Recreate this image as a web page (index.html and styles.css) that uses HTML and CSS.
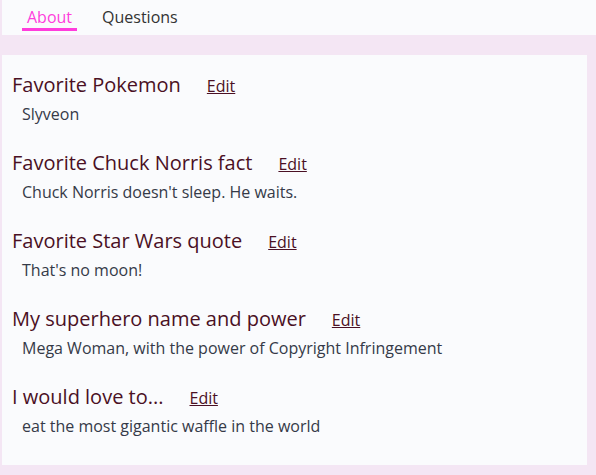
FILE: index.html
```html
<!DOCTYPE html>
<html>
<head>
<meta charset="utf-8">
<link rel="stylesheet" href="styles.css">
</head>
<body>
<nav class="tabs">
  <a class="tab active">About</a>
  <a class="tab">Questions</a>
</nav>
<main class="card">
  <section class="item">
    <div class="item-head"><h2>Favorite Pokemon</h2><a class="edit">Edit</a></div>
    <p>Slyveon</p>
  </section>
  <section class="item">
    <div class="item-head"><h2>Favorite Chuck Norris fact</h2><a class="edit">Edit</a></div>
    <p>Chuck Norris doesn't sleep. He waits.</p>
  </section>
  <section class="item">
    <div class="item-head"><h2>Favorite Star Wars quote</h2><a class="edit">Edit</a></div>
    <p>That's no moon!</p>
  </section>
  <section class="item">
    <div class="item-head"><h2>My superhero name and power</h2><a class="edit">Edit</a></div>
    <p>Mega Woman, with the power of Copyright Infringement</p>
  </section>
  <section class="item">
    <div class="item-head"><h2>I would love to...</h2><a class="edit">Edit</a></div>
    <p>eat the most gigantic waffle in the world</p>
  </section>
</main>
</body>
</html>
```
FILE: styles.css
```css
html, body {
  margin: 0;
  padding: 0;
}
body {
  background: #f4e6f4;
  font-family: "Open Sans", sans-serif;
  height: 475px;
  overflow: hidden;
}
.tabs {
  margin-left: 2px;
  height: 35px;
  background: #fafbfd;
  display: flex;
  gap: 20px;
  padding-left: 20px;
  box-sizing: border-box;
}
.tab {
  font-size: 16px;
  line-height: 22px;
  padding: 6px 5px 0;
  color: #333;
  box-sizing: border-box;
  border-bottom: 3px solid transparent;
  height: 31px;
}
.tab.active {
  color: #ff3ddc;
  border-bottom-color: #ff3ddc;
}
.card {
  margin: 20px 9px 0 2px;
  height: 410px;
  background: #fafbfd;
  padding: 14px 10px 0;
  box-sizing: border-box;
}
.item {
  height: 78px;
}
.item-head {
  display: flex;
  align-items: baseline;
  gap: 26px;
}
h2 {
  margin: 0;
  font-size: 20px;
  font-weight: 400;
  line-height: 32px;
  color: #4a1024;
}
.edit {
  font-size: 16px;
  color: #4a1024;
  text-decoration: underline;
}
p {
  margin: 0;
  padding-left: 10px;
  font-size: 16px;
  line-height: 26px;
  color: #353a48;
}
```
